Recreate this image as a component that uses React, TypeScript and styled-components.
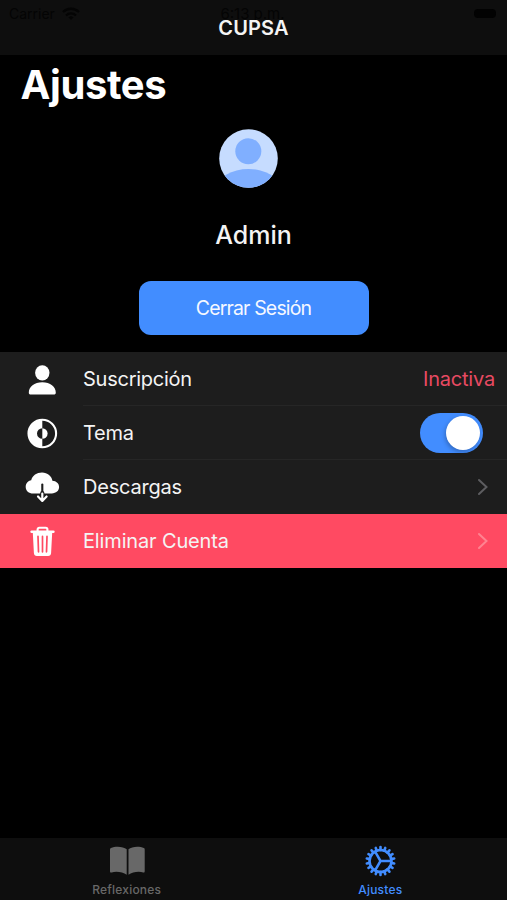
import React from 'react';
import styled, { createGlobalStyle } from 'styled-components';

const GlobalStyle = createGlobalStyle`
  * { box-sizing: border-box; }
  body { margin: 0; background: #000; }
`;

const Screen = styled.div`
  width: 507px;
  height: 900px;
  display: flex;
  flex-direction: column;
  overflow: hidden;
  background: #000;
  color: #f4f4f4;
  font-family: Inter, 'Liberation Sans', sans-serif;
`;

const Header = styled.header`
  height: 55px;
  flex: none;
  display: flex;
  flex-direction: column;
  background: #0e0e0e;
`;

const StatusBar = styled.div`
  height: 17px;
  padding: 5px 11px 0 9px;
  display: grid;
  grid-template-columns: 1fr auto 1fr;
  color: #040404;
  font-size: 15px;
  line-height: 18px;
  white-space: nowrap;
`;

const Carrier = styled.div`
  display: flex;
  align-items: center;
  gap: 7px;
  height: 18px;
  font-size: 14px;
`;

const Battery = styled.div`
  justify-self: end;
  width: 22px;
  height: 9px;
  margin-top: 4px;
  border-radius: 4px;
  background: #020202;
`;

const NavTitle = styled.div`
  text-align: center;
  font-size: 20px;
  font-weight: 600;
  line-height: 22px;
  letter-spacing: 0.15px;
`;

const LargeTitle = styled.h1`
  margin: 5px 0 0 20.5px;
  font-size: 40px;
  font-weight: 700;
  line-height: 50px;
  letter-spacing: -0.4px;
  color: #fff;
`;

const Profile = styled.section`
  height: 242px;
  padding-top: 19px;
  display: flex;
  flex-direction: column;
  align-items: center;
`;

const Avatar = styled.svg`
  width: 59px;
  height: 59px;
  margin-right: 11px;
  flex: none;
`;

const UserName = styled.div`
  margin-top: 31px;
  line-height: 32px;
  font-size: 25px;
  font-weight: 500;
  letter-spacing: 0;
`;

const SignOut = styled.button`
  width: 230px;
  height: 54px;
  margin-top: 30px;
  flex: none;
  border: 0;
  border-radius: 12px;
  background: #428dff;
  color: #f5f8ff;
  font: 400 19.5px Inter, sans-serif;
  letter-spacing: -0.85px;
`;

const List = styled.div`
  flex: none;
`;

const Row = styled.div<{ $danger?: boolean }>`
  height: 54px;
  display: grid;
  grid-template-columns: 83px 1fr;
  background: ${p => (p.$danger ? '#ff4a62' : '#1d1d1d')};
`;

const RowIcon = styled.div`
  display: flex;
  align-items: center;
  justify-content: center;
  svg { width: 36px; height: 36px; }
`;

const RowBody = styled.div<{ $divider?: boolean; $end: number }>`
  display: flex;
  align-items: center;
  justify-content: space-between;
  padding-top: 1px;
  padding-right: ${p => p.$end}px;
  border-bottom: 1px solid ${p => (p.$divider ? '#262626' : 'transparent')};
`;

const Label = styled.span<{ $spacing: number }>`
  font-size: 20px;
  line-height: 28px;
  letter-spacing: ${p => p.$spacing}px;
`;

const Status = styled.span`
  font-size: 20px;
  letter-spacing: -0.2px;
  color: #e84a62;
`;

const Switch = styled.div`
  width: 63px;
  height: 40px;
  padding: 3px;
  display: flex;
  justify-content: flex-end;
  border-radius: 20px;
  background: #428dff;
`;

const Knob = styled.div`
  width: 34px;
  height: 34px;
  border-radius: 50%;
  background: #fff;
  box-shadow: -1px 2px 4px rgba(0, 0, 0, 0.25);
`;

const TabBar = styled.nav`
  height: 62px;
  margin-top: auto;
  flex: none;
  display: grid;
  grid-template-columns: 1fr 1fr;
  background: #0e0e0e;
`;

const Tab = styled.div<{ $active?: boolean }>`
  display: flex;
  flex-direction: column;
  align-items: center;
  padding-top: 5px;
  color: ${p => (p.$active ? '#428dff' : '#686868')};
  svg { width: 36px; height: 36px; }
`;

const TabLabel = styled.span`
  margin-top: 3px;
  font-size: 12px;
  font-weight: 500;
  line-height: 16px;
  letter-spacing: 0.2px;
`;

const Chevron = ({ color }: { color: string }) => (
  <svg width="12" height="18" viewBox="0 0 12 18" fill="none" stroke={color} strokeWidth="2" strokeLinecap="round">
    <path d="M2 2l7.5 7L2 16" />
  </svg>
);

const PersonIcon = () => (
  <svg viewBox="0 0 36 36" fill="#fff">
    <ellipse cx="18.3" cy="11.8" rx="7.2" ry="7.6" />
    <path d="M4.800 31.800C4.800 25.800 10.400 21.300 18.300 21.300s13.500 4.500 13.500 10.500c0 1.200-.7 1.800-2 1.800h-23c-1.300 0-2-.6-2-1.800z" />
  </svg>
);

const ThemeIcon = () => (
  <svg viewBox="0 0 36 36">
    <circle cx="18.300" cy="18.500" r="13.800" fill="none" stroke="#fff" strokeWidth="2.100" />
    <path d="M18.300 4.500a14 14 0 0 0 0 28v-8.700a5.300 5.300 0 0 1 0-10.600z" fill="#fff" />
    <path d="M18.300 13.200a5.300 5.300 0 0 1 0 10.600z" fill="#fff" />
  </svg>
);

const CloudIcon = () => (
  <svg viewBox="0 0 36 36">
    <path d="M9.200 24.400C4.700 24.400 1.700 21.700 1.700 17.900c0-3.500 2.200-6 5.500-6.700C8.400 6.600 12.800 3.500 18 3.500c5.600 0 9.800 3.700 10.400 8.300 3.900.2 6.700 2.700 6.700 6.300 0 3.800-3 6.300-7.300 6.300z" fill="#fff" />
    <path d="M18.300 15.500v8" stroke="#1d1d1d" strokeWidth="2.100" strokeLinecap="round" />
    <path d="M18.300 24v7.300M14 27.200l4.300 4.400 4.300-4.400" fill="none" stroke="#1d1d1d" strokeWidth="4.200" strokeLinecap="round" strokeLinejoin="round" />
    <path d="M18.300 24.500v7M14 27.500l4.300 4.400 4.300-4.400" fill="none" stroke="#fff" strokeWidth="2.200" strokeLinecap="round" strokeLinejoin="round" />
  </svg>
);

const TrashIcon = () => (
  <svg viewBox="0 0 36 36" fill="none" stroke="#fff" strokeLinecap="round" strokeLinejoin="round">
    <path d="M7.600 8.800h21.800" strokeWidth="2.500" />
    <path d="M13.600 8.500V6.500c0-1 .7-1.700 1.700-1.700h6.400c1 0 1.700.7 1.700 1.700v2" strokeWidth="2.100" />
    <path d="M8.800 9.500h19.400l-1.100 20.400c-.1 2-1.200 3-3 3H12.900c-1.800 0-2.900-1-3-3z" fill="#fff" stroke="none" />
    <path d="M14 13.400l.5 15.400M18.500 13.400v15.400M23 13.400l-.5 15.400" stroke="#ff4a62" strokeWidth="1.700" />
  </svg>
);

const BookIcon = () => (
  <svg viewBox="0 0 36 36" fill="currentColor">
    <path d="M17.700 6.300v25.400C14 28.900 7 28 2.700 29.400c-1.200.4-1.700 0-1.700-1.200V6.400c0-.7.300-1.200 1-1.500 4.300-1.900 12.400-1.700 15.700 1.400z" />
    <path d="M19.500 6.300v25.400c3.700-2.800 10.500-3.700 14.700-2.300 1 .3 1.500-.1 1.500-1.200V6.400c0-.7-.2-1.200-.9-1.500-4.300-1.900-12-1.700-15.300 1.400z" />
  </svg>
);

const teeth = Array.from({ length: 18 }, (_, i) => i * 20);
const GearIcon = () => (
  <svg viewBox="0 0 36 36" fill="none" stroke="currentColor">
    <circle cx="18.500" cy="18" r="11" strokeWidth="2.600" />
    {teeth.map(angle => (
      <path key={angle} d="M18.500 4.100v3" strokeWidth="2.600" strokeLinecap="round" transform={`rotate(${angle} 18.500 18)`} />
    ))}
    <path d="M29 18H18.500l-5.400-9.300M18.500 18l-5.400 9.300" strokeWidth="2.500" strokeLinejoin="round" />
  </svg>
);

const WifiIcon = () => (
  <svg width="18" height="14" viewBox="0 0 18 14" fill="none" stroke="#040404" strokeWidth="2.300">
    <path d="M1 5a11.500 11.500 0 0 1 16 0M4 8.500a7 7 0 0 1 10 0" />
    <path d="M6.500 10.500a3.700 3.700 0 0 1 5 0L9 13z" fill="#040404" stroke="none" />
  </svg>
);

export default function App() {
  return (
    <Screen>
      <GlobalStyle />
      <Header>
        <StatusBar>
          <Carrier>Carrier<WifiIcon /></Carrier>
          <span>6:13 p.m.</span>
          <Battery />
        </StatusBar>
        <NavTitle>CUPSA</NavTitle>
      </Header>
      <LargeTitle>Ajustes</LargeTitle>
      <Profile>
        <Avatar viewBox="0 0 59 59">
          <defs><clipPath id="avatar-circle"><circle cx="29.500" cy="29.500" r="29.300" /></clipPath></defs>
          <g clipPath="url(#avatar-circle)">
            <path d="M0 0h59v59H0z" fill="#c6dcff" />
            <circle cx="29.300" cy="22.300" r="13" fill="#80afff" />
            <ellipse cx="29.500" cy="59" rx="31" ry="19" fill="#80afff" />
          </g>
        </Avatar>
        <UserName>Admin</UserName>
        <SignOut>Cerrar Sesión</SignOut>
      </Profile>
      <List>
        <Row>
          <RowIcon><PersonIcon /></RowIcon>
          <RowBody $divider $end={12}><Label $spacing={-0.25}>Suscripción</Label><Status>Inactiva</Status></RowBody>
        </Row>
        <Row>
          <RowIcon><ThemeIcon /></RowIcon>
          <RowBody $divider $end={24}><Label $spacing={-0.3}>Tema</Label><Switch><Knob /></Switch></RowBody>
        </Row>
        <Row>
          <RowIcon><CloudIcon /></RowIcon>
          <RowBody $end={18}><Label $spacing={-0.2}>Descargas</Label><Chevron color="#5d5d60" /></RowBody>
        </Row>
        <Row $danger>
          <RowIcon><TrashIcon /></RowIcon>
          <RowBody $end={18}><Label $spacing={-0.15}>Eliminar Cuenta</Label><Chevron color="#ff8390" /></RowBody>
        </Row>
      </List>
      <TabBar>
        <Tab><BookIcon /><TabLabel>Reflexiones</TabLabel></Tab>
        <Tab $active><GearIcon /><TabLabel>Ajustes</TabLabel></Tab>
      </TabBar>
    </Screen>
  );
}
